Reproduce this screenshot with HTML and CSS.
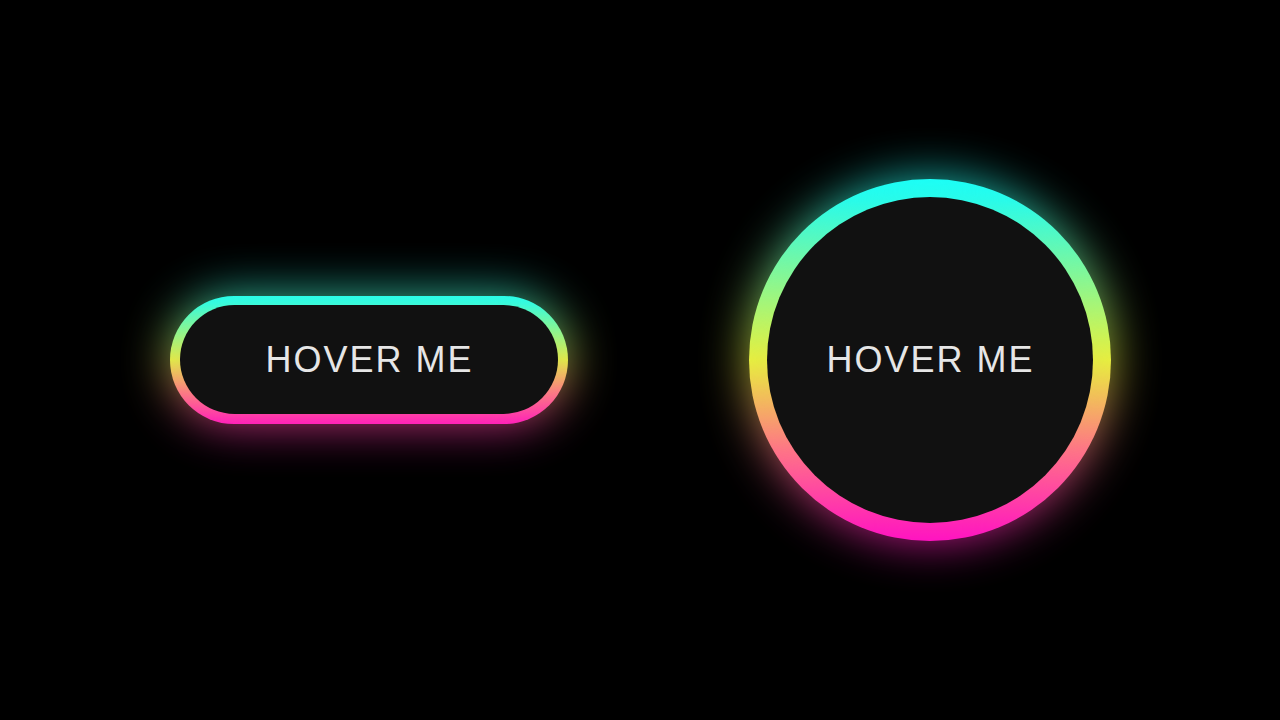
FILE: index.html
```html
<!DOCTYPE html>
<html>
<head>
<meta charset="utf-8">
<link rel="stylesheet" href="styles.css">
</head>
<body>
<main class="stage">
  <button class="neon pill"><span class="label">HOVER ME</span></button>
  <button class="neon circle"><span class="label">HOVER ME</span></button>
</main>
</body>
</html>
```
FILE: styles.css
```css
html, body {
  margin: 0;
  padding: 0;
  background: #000;
  height: 100%;
}
.stage {
  height: 720px;
  display: flex;
  align-items: center;
  justify-content: center;
  gap: 181px;
}
.neon {
  position: relative;
  isolation: isolate;
  border: none;
  padding: 10px;
  background: linear-gradient(to bottom, #18fffa 0%, #22fbf0 6%, #e9f23a 50%, #ff6f8a 75%, #ff0cc6 100%);
  font-family: "Liberation Sans", Arial, sans-serif;
  cursor: pointer;
  display: flex;
  box-sizing: border-box;
}
.neon::before {
  content: "";
  position: absolute;
  inset: 0;
  border-radius: inherit;
  background: inherit;
  filter: blur(24px);
  opacity: 0.75;
  z-index: -1;
}
.pill {
  width: 398px;
  height: 128px;
  border-radius: 64px;
  padding: 9px 10px 10px 10px;
}
.circle {
  width: 362px;
  height: 362px;
  border-radius: 50%;
  padding: 18px;
}
.label {
  flex: 1;
  display: flex;
  align-items: center;
  justify-content: center;
  background: #111;
  border-radius: inherit;
  color: #e6e6e6;
  font-size: 36px;
  letter-spacing: 2px;
  padding-left: 2px;
}
.pill .label { border-radius: 55px; }
.circle .label { border-radius: 50%; }
```
